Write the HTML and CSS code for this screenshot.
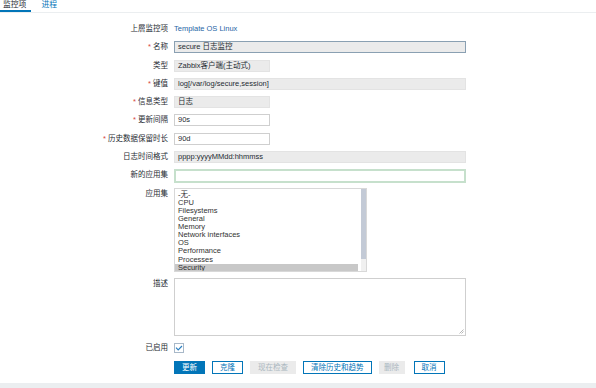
FILE: index.html
```html
<!DOCTYPE html>
<html>
<head>
<meta charset="utf-8">
<link rel="stylesheet" href="styles.css">
</head>
<body>
<div class="page">
  <div class="tabs">
    <span class="tab active">监控项</span>
    <span class="tab">进程</span>
  </div>
  <div class="form">
    <div class="label">上層监控项</div>
    <div class="field"><a class="link">Template OS Linux</a></div>

    <div class="label"><span class="req">*</span> 名称</div>
    <div class="field"><div class="input long focus">secure 日志监控</div></div>

    <div class="label">类型</div>
    <div class="field"><div class="input short ro">Zabbix客户端(主动式)</div></div>

    <div class="label"><span class="req">*</span> 键值</div>
    <div class="field"><div class="input long ro">log[/var/log/secure,session]</div></div>

    <div class="label"><span class="req">*</span> 信息类型</div>
    <div class="field"><div class="input short ro">日志</div></div>

    <div class="label"><span class="req">*</span> 更新间隔</div>
    <div class="field"><div class="input short">90s</div></div>

    <div class="label"><span class="req">*</span> 历史数据保留时长</div>
    <div class="field"><div class="input short">90d</div></div>

    <div class="label">日志时间格式</div>
    <div class="field"><div class="input long ro">pppp:yyyyMMdd:hhmmss</div></div>

    <div class="label">新的应用集</div>
    <div class="field"><div class="input long green"></div></div>

    <div class="label top">应用集</div>
    <div class="field">
      <div class="listbox">
        <div class="options">
          <div class="opt">-无-</div>
          <div class="opt">CPU</div>
          <div class="opt">Filesystems</div>
          <div class="opt">General</div>
          <div class="opt">Memory</div>
          <div class="opt">Network interfaces</div>
          <div class="opt">OS</div>
          <div class="opt">Performance</div>
          <div class="opt">Processes</div>
          <div class="opt sel">Security</div>
        </div>
        <div class="scrollbar"><div class="thumb"></div></div>
      </div>
    </div>

    <div class="label top">描述</div>
    <div class="field"><div class="textarea"><svg class="grip" width="5" height="5" viewBox="0 0 5 5"><path d="M4.5 0.5 L0.5 4.5 M4.5 2.5 L2.5 4.5" stroke="#999" stroke-width="0.7"/></svg></div></div>

    <div class="label">已启用</div>
    <div class="field"><span class="check"><svg width="8" height="6" viewBox="0 0 8 6"><path d="M1 2.6 L3.2 4.8 L7 1" fill="none" stroke="#2a7fc0" stroke-width="1.2"/></svg></span></div>

    <div class="label"></div>
    <div class="field buttons">
      <span class="btn primary">更新</span>
      <span class="btn alt">克隆</span>
      <span class="btn dis">现在检查</span>
      <span class="btn alt">清除历史和趋势</span>
      <span class="btn dis small">删除</span>
      <span class="btn alt">取消</span>
    </div>
  </div>
  <div class="footer"></div>
</div>
</body>
</html>
```

FILE: styles.css
```css
html, body {
  margin: 0;
  padding: 0;
  background: #ffffff;
}
body {
  font-family: "Liberation Sans", "Noto Sans CJK SC", sans-serif;
  font-size: 7.5px;
  color: #1f2c33;
  width: 596px;
  height: 388px;
  overflow: hidden;
}
.page {
  display: flex;
  flex-direction: column;
  height: 388px;
}
.tabs {
  display: flex;
  height: 12px;
  border-bottom: 1px solid #ebeef0;
  align-items: flex-start;
}
.tab {
  font-size: 7.8px;
  line-height: 10px;
  padding: 0 3px 0 3px;
  margin-right: 7px;
  color: #0275b8;
  height: 10px;
}
.tab.active {
  color: #1f2c33;
  border-bottom: 2px solid #0275b8;
  padding-right: 5px;
}
.form {
  display: grid;
  grid-template-columns: 168px 292px;
  column-gap: 6px;
  row-gap: 6.25px;
  margin-top: 10px;
  flex: 1;
  align-content: start;
}
.label {
  text-align: right;
  line-height: 12px;
  color: #1f2c33;
  white-space: nowrap;
}
.label.top {
  line-height: 10px;
}
.req {
  color: #d64541;
}
.field {
  display: flex;
  align-items: center;
  min-height: 12px;
}
.link {
  color: #1f65a6;
  line-height: 12px;
}
.input {
  box-sizing: border-box;
  height: 12px;
  line-height: 10px;
  border: 1px solid #cfcfcf;
  background: #ffffff;
  padding: 0 3px;
  white-space: nowrap;
  overflow: hidden;
}
.input.long { width: 292px; }
.input.short { width: 96px; }
.input.ro {
  background: #ebebeb;
  border-color: #e3e3e3;
}
.input.focus {
  background: #ebebeb;
  border-color: #8aa0b2;
}
.input.green {
  height: 14px;
  border: 2px solid #c6e0cc;
  width: 293px;
}
.listbox {
  box-sizing: border-box;
  width: 193px;
  height: 84px;
  border: 1px solid #d8d8d8;
  display: flex;
  background: #fff;
  margin-top: -1px;
}
.options {
  flex: 1;
  padding: 1.5px 0 0 3px;
  overflow: hidden;
}
.opt {
  line-height: 8.1px;
  height: 8.1px;
  white-space: nowrap;
  color: #333;
}
.opt.sel {
  background: #c8c8c8;
  margin-right: 3px;
  margin-left: -3px;
  padding-left: 3px;
}
.scrollbar {
  width: 5px;
  background: #f0f0f0;
  display: flex;
  flex-direction: column;
}
.thumb {
  flex: 1;
  margin: 0 0 12px 0;
  background: #c3cad6;
}
.textarea {
  box-sizing: border-box;
  width: 292px;
  height: 58px;
  border: 1px solid #cfcfcf;
  background: #fff;
  display: flex;
  justify-content: flex-end;
  align-items: flex-end;
  padding: 1px;
  margin-top: -1px;
}
.grip {
  display: block;
}
.check {
  box-sizing: border-box;
  width: 10px;
  height: 10px;
  border: 1px solid #a8b8c8;
  display: flex;
  align-items: center;
  justify-content: center;
  background: #fff;
}
.buttons {
  display: flex;
  gap: 7px;
  align-items: center;
  margin-top: 1px;
}
.btn {
  box-sizing: border-box;
  height: 13px;
  line-height: 11px;
  font-size: 7.5px;
  padding: 0 7px;
  border: 1px solid #0275b8;
  color: #0275b8;
  background: #fff;
  white-space: nowrap;
}
.btn.primary {
  background: #0275b8;
  color: #fff;
}
.btn.dis {
  background: #ebebeb;
  border-color: #ebebeb;
  color: #aab7bf;
}
.btn.dis.small {
  padding: 0 4.5px;
  margin-right: 2px;
}
.footer {
  height: 5px;
  background: #ebeef0;
  margin-top: auto;
}
```
